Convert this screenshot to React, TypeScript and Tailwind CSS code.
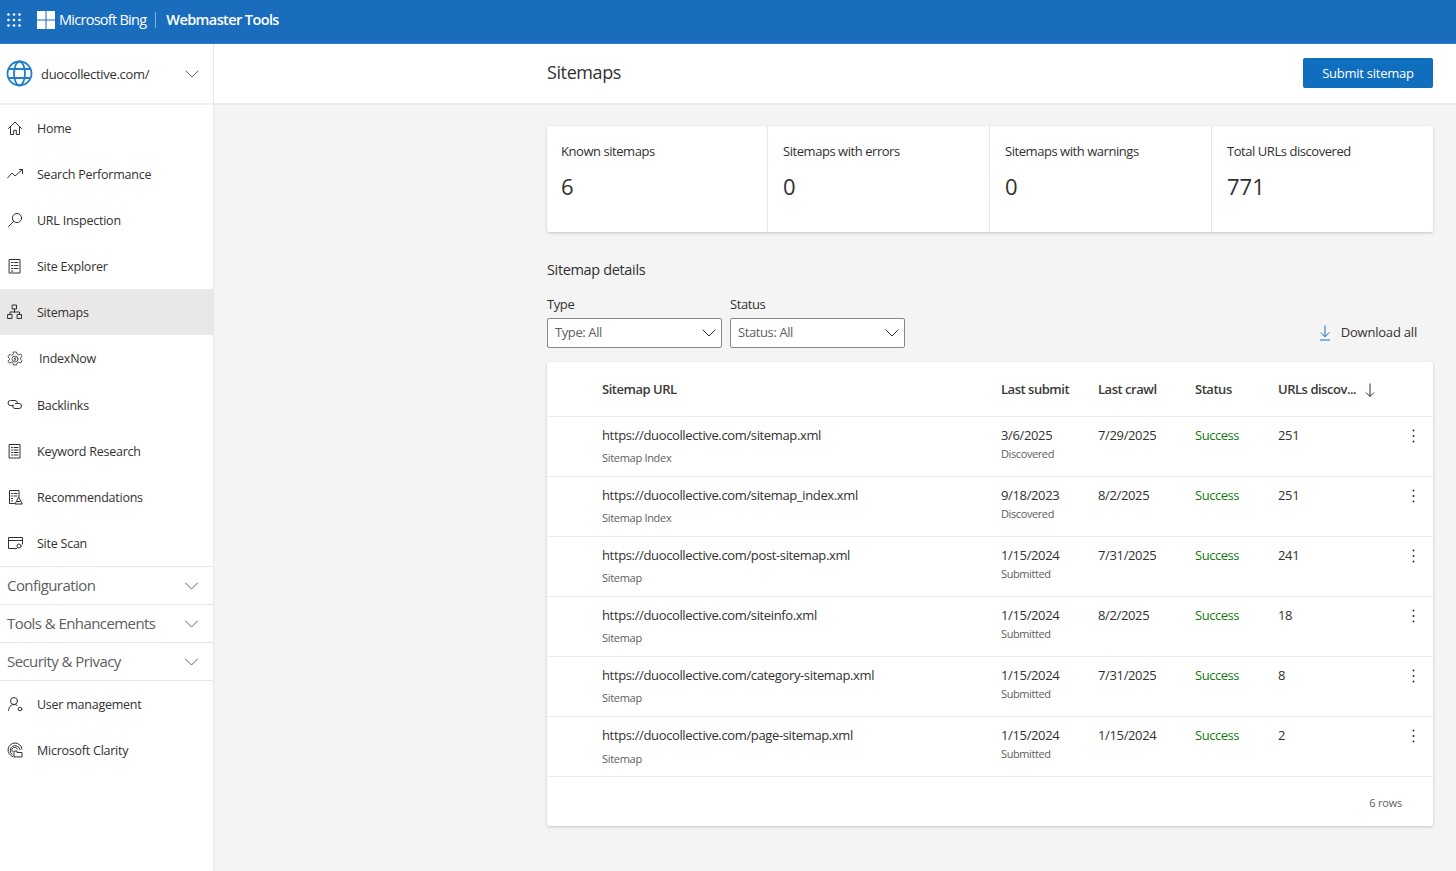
import React from "react";

const S = { fill: "none", stroke: "currentColor", strokeWidth: 1, strokeLinecap: "round" as const, strokeLinejoin: "round" as const };

const Chevron = ({ className = "" }: { className?: string }) => (
  <svg width="14" height="8" viewBox="0 0 14 8" className={className}><path d="M.7.7 7 7l6.3-6.3" fill="none" stroke="currentColor" strokeWidth="1" /></svg>
);

const icons: Record<string, React.ReactNode> = {
  home: <path d="M1.500 8.500 8 2l6.500 6.500M3.500 7v7.500h3.200v-4.200h2.600v4.200h3.200V7" {...S} />,
  perf: <path d="M.5 12 5 7l3 3 7-6M12.500 3.500h3v4" {...S} />,
  url: <g {...S}><circle cx="10" cy="6" r="4.600" /><path d="M6.700 9.300 1.500 14.500" /></g>,
  site: <g {...S}><rect x="2.500" y="1.500" width="10.500" height="13.500" /><path d="M4.500 4.500H6M7.500 4.500H11M4.500 7.500H6M7.500 7.500H11M4.500 10.500H6M7.500 10.500H11M4.500 13H6" /></g>,
  sitemaps: <g {...S}><rect x="5.500" y="1" width="4" height="4" /><rect x="1" y="10.500" width="4" height="4" /><rect x="10.500" y="10.500" width="4" height="4" /><path d="M7.500 5v3M3 10.500V8h9.500v2.500" /></g>,
  index: <g {...S} strokeWidth={0.8}><path d="M6.500 1h3l.5 2 1.700.8 1.900-.9 1.500 2.600-1.600 1.300v1.400l1.600 1.300-1.500 2.600-1.900-.9-1.700.8-.5 2h-3l-.5-2-1.700-.8-1.900.9L.9 10l1.600-1.300V7.300L.9 6l1.500-2.600 1.900.9L6 3.500z" /><circle cx="8" cy="8" r="3" /><path d="M9 6.800H7.500v1.200h1v1.200H7" /></g>,
  back: <g {...S}><path d="M6.500 8.500h-3a2.500 2.500 0 0 1 0-5H8a2.500 2.500 0 0 1 2.500 2.200" /><path d="M8.500 6.500H12a2.500 2.500 0 0 1 0 5H8a2.500 2.500 0 0 1-2.400-2" /></g>,
  keyword: <g {...S}><rect x="2.500" y="1.500" width="10.500" height="13.500" /><path d="M4.500 4.500h1M7 4.500h4M4.500 7h1M7 7h4M4.500 9.500h1M7 9.500h4M4.500 12h1M7 12h4" /></g>,
  rec: <g {...S}><path d="M7.500 14.500h-5v-13H12v6.500" /><path d="M4.500 4.500h1M7 4.500h3M4.500 7h1M7 7h3M4.500 9.500h1M4.500 12h1" /><path d="m11.500 8.500-3.500 6.500h7z" /><path d="M10 12.500h3" /></g>,
  scan: <g {...S}><path d="M8.500 13.500H1.500v-11h14v6.500" /><path d="M1.500 5.500h14" /><circle cx="12" cy="11" r="2" /><path d="m10.500 12.500-1.500 1.500" /></g>,
  user: <g {...S}><circle cx="7" cy="5" r="3.500" /><path d="M1.500 14.500c.3-3.500 2.300-6 5.500-6 1.200 0 2.200.3 3 .9" /><circle cx="13" cy="13" r="1.800" /></g>,
  clarity: <g {...S}><path d="M6 14.700A7 7 0 1 1 15 7" /><path d="M5 12.500A5 5 0 1 1 13 7.500" /><path d="M5 9.500A3 3 0 1 1 10.500 7" /><path d="M7 14.500V9h3v1.500h5v4z" /></g>,
};

const Ico = ({ name }: { name: string }) => (
  <svg width="16" height="16" viewBox="0 0 16 16" className="shrink-0 text-[#323130]">{icons[name]}</svg>
);

const NavItem = ({ icon, label, active, pad = "gap-[14px]", h = "h-[46px]" }: { icon: string; label: string; active?: boolean; pad?: string; h?: string }) => (
  <div className={`${h} flex items-center pl-[7px] ${pad} text-[12.5px] tracking-[-0.24px] text-[#323130] ${active ? "bg-[#e9e8e6]" : ""}`}>
    <Ico name={icon} />
    <span className="pt-[2px]">{label}</span>
  </div>
);

const Section = ({ label }: { label: string }) => (
  <div className="h-[38px] flex items-center justify-between pl-[7px] pr-[14px] border-b border-[#e6e6e6] text-[15px] tracking-[-0.57px] text-[#605e5c]">
    <span>{label}</span>
    <Chevron className="text-[#605e5c] w-[15px]" />
  </div>
);

const Stat = ({ label, value, className }: { label: string; value: string; className: string }) => (
  <div className={`pt-[16px] ${className}`}>
    <div className="text-[13px] leading-[18px] tracking-[-0.45px] text-[#323130]">{label}</div>
    <div className="text-[22px] leading-[30px] mt-[11px] text-[#323130]">{value}</div>
  </div>
);

const Select = ({ label, value }: { label: string; value: string }) => (
  <div className="w-[175px]">
    <div className="text-[13px] leading-[18px] tracking-[-0.4px] text-[#323130] font-medium mb-[5px]">{label}</div>
    <div className="h-[30px] bg-white border border-[#8a8886] rounded-[2px] flex items-center justify-between pl-[7px] pr-[5px] text-[13px] tracking-[-0.4px] text-[#605e5c]">
      <span>{value}</span>
      <Chevron className="text-[#323130]" />
    </div>
  </div>
);

const COLS = "grid grid-cols-[55px_399px_97px_97px_83px_120px_1fr]";

const rows = [
  ["https://duocollective.com/sitemap.xml", "Sitemap Index", "3/6/2025", "Discovered", "7/29/2025", "251", "mt-[7px]"],
  ["https://duocollective.com/sitemap_index.xml", "Sitemap Index", "9/18/2023", "Discovered", "8/2/2025", "251", "mt-[7px]"],
  ["https://duocollective.com/post-sitemap.xml", "Sitemap", "1/15/2024", "Submitted", "7/31/2025", "241", "mt-[7px]"],
  ["https://duocollective.com/siteinfo.xml", "Sitemap", "1/15/2024", "Submitted", "8/2/2025", "18", "mt-[7px]"],
  ["https://duocollective.com/category-sitemap.xml", "Sitemap", "1/15/2024", "Submitted", "7/31/2025", "8", "mt-[7px]"],
  ["https://duocollective.com/page-sitemap.xml", "Sitemap", "1/15/2024", "Submitted", "1/15/2024", "2", "mt-[8px]"],
];

export default function App() {
  return (
    <div className="h-[871px] w-[1456px] overflow-hidden flex flex-col bg-[#f4f4f4] font-['Open_Sans','Noto_Sans',sans-serif]">
      <header className="h-[44px] shrink-0 bg-[#1a6cbd] border-b border-[#2b7cd3] flex items-center pb-[4px] text-white">
        <svg width="14" height="14" viewBox="0 0 14 14" className="ml-[7px]" fill="currentColor">
          {[1.5, 7, 12.5].flatMap((y) => [1.5, 7, 12.5].map((x) => <circle key={`${x}-${y}`} cx={x} cy={y} r="1.300" />))}
        </svg>
        <svg width="18" height="18" viewBox="0 0 18 18" className="ml-[16px]" fill="currentColor">
          <rect width="8.500" height="8.500" /><rect x="9.500" width="8.500" height="8.500" /><rect y="9.500" width="8.500" height="8.500" /><rect x="9.500" y="9.500" width="8.500" height="8.500" />
        </svg>
        <span className="ml-[4px] text-[14.5px] tracking-[-0.73px]">Microsoft Bing</span>
        <span className="ml-[9px] h-[16px] w-px bg-[#7fb0e0]" />
        <span className="ml-[10px] text-[14.5px] font-semibold tracking-[-0.6px]">Webmaster Tools</span>
      </header>
      <div className="flex-1 flex min-h-0">
        <aside className="w-[214px] shrink-0 bg-white border-r border-[#e6e6e6]">
          <div className="h-[61px] border-b-2 border-[#efefef] flex items-center pl-[6px] pr-[14px]">
            <svg width="27" height="27" viewBox="0 0 27 27" fill="none" stroke="#1f7fcc" strokeWidth="1.800">
              <circle cx="13.500" cy="13.500" r="12" /><ellipse cx="13.500" cy="13.500" rx="5.500" ry="12" /><path d="M2.500 9h22M2.500 18h22" />
            </svg>
            <span className="ml-[8px] pt-[2px] text-[13px] tracking-[-0.32px] text-[#323130] flex-1">duocollective.com/</span>
            <Chevron className="text-[#605e5c]" />
          </div>
          <NavItem icon="home" label="Home" />
          <NavItem icon="perf" label="Search Performance" />
          <NavItem icon="url" label="URL Inspection" />
          <NavItem icon="site" label="Site Explorer" />
          <NavItem icon="sitemaps" label="Sitemaps" active />
          <NavItem icon="index" label="IndexNow" pad="gap-[16px]" h="h-[47px]" />
          <NavItem icon="back" label="Backlinks" />
          <NavItem icon="keyword" label="Keyword Research" />
          <NavItem icon="rec" label="Recommendations" />
          <NavItem icon="scan" label="Site Scan" />
          <div className="border-t border-[#e6e6e6]">
            <Section label="Configuration" />
            <Section label="Tools & Enhancements" />
            <Section label="Security & Privacy" />
          </div>
          <NavItem icon="user" label="User management" />
          <NavItem icon="clarity" label="Microsoft Clarity" />
        </aside>
        <main className="flex-1 min-w-0">
          <div className="h-[61px] bg-white border-b-2 border-[#ececec] flex items-center justify-between pb-[2px] pl-[333px] pr-[23px]">
            <h1 className="text-[18px] tracking-[-0.4px] text-[#323130]">Sitemaps</h1>
            <button className="w-[130px] h-[30px] pt-[2px] bg-[#106ebe] rounded-[2px] text-white text-[13px] font-medium tracking-[-0.25px]">Submit sitemap</button>
          </div>
          <div className="pl-[333px] pr-[23px] pt-[21px]">
            <section className="h-[106px] bg-white shadow-[0_1px_3px_rgba(0,0,0,0.2)] rounded-[2px] flex divide-x divide-[#e6e6e6]">
              <Stat label="Known sitemaps" value="6" className="w-[221px] pl-[14px]" />
              <Stat label="Sitemaps with errors" value="0" className="w-[222px] pl-[15px]" />
              <Stat label="Sitemaps with warnings" value="0" className="w-[222px] pl-[15px]" />
              <Stat label="Total URLs discovered" value="771" className="flex-1 pl-[15px]" />
            </section>
            <h2 className="mt-[28px] text-[14.500px] leading-[20px] tracking-[-0.35px] text-[#323130]">Sitemap details</h2>
            <div className="mt-[15px] flex items-end gap-[8px]">
              <Select label="Type" value="Type: All" />
              <Select label="Status" value="Status: All" />
              <div className="flex-1 h-[30px] flex items-center justify-end pr-[16px] text-[13px] tracking-[-0.2px] text-[#323130] font-medium">
                <svg width="12" height="16" viewBox="0 0 12 16" fill="none" stroke="#106ebe" strokeWidth="1" className="mr-[10px]"><path d="M6 .5v11M1.800 7.500 6 11.800l4.200-4.300M1 15h10" /></svg>
                Download all
              </div>
            </div>
            <section className="mt-[14px] h-[464px] bg-white shadow-[0_1px_3px_rgba(0,0,0,0.2)] rounded-[2px]">
              <div className={`${COLS} h-[55px] pt-[2px] items-center border-b border-[#ececec] text-[13px] font-semibold tracking-[-0.47px] text-[#3b3a39]`}>
                <span className="col-start-2">Sitemap URL</span>
                <span>Last submit</span>
                <span>Last crawl</span>
                <span>Status</span>
                <span className="flex items-center">
                  URLs discov...
                  <svg width="10" height="16" viewBox="0 0 10 16" fill="none" stroke="#323130" strokeWidth="1" className="ml-[9px]"><path d="M5 1.500v13M1 10.500l4 4 4-4" /></svg>
                </span>
              </div>
              {rows.map((r) => (
                <div key={r[0]} className={`${COLS} h-[60px] pt-[9px] border-b border-[#ececec] text-[13px] tracking-[-0.36px] text-[#323130]`}>
                  <div className="col-start-2">
                    <div className="leading-[18px]">{r[0]}</div>
                    <div className={`text-[11px] leading-[14px] tracking-[-0.3px] ${r[6]} text-[#605e5c]`}>{r[1]}</div>
                  </div>
                  <div>
                    <div className="leading-[18px]">{r[2]}</div>
                    <div className="text-[11px] leading-[14px] tracking-[-0.4px] mt-[3px] text-[#605e5c]">{r[3]}</div>
                  </div>
                  <div className="leading-[18px]">{r[4]}</div>
                  <div className="leading-[18px] tracking-[-0.45px] text-[#107c10]">Success</div>
                  <div className="leading-[18px]">{r[5]}</div>
                  <svg width="3" height="14" viewBox="0 0 3 14" fill="#323130" className="mt-[3px] ml-[14px]"><circle cx="1.500" cy="1.500" r="1" /><circle cx="1.500" cy="7" r="1" /><circle cx="1.500" cy="12.500" r="1" /></svg>
                </div>
              ))}
              <div className="h-[49px] flex items-center justify-end pr-[31px] pt-[4px] text-[11px] tracking-[-0.2px] text-[#605e5c]">6 rows</div>
            </section>
          </div>
        </main>
      </div>
    </div>
  );
}
